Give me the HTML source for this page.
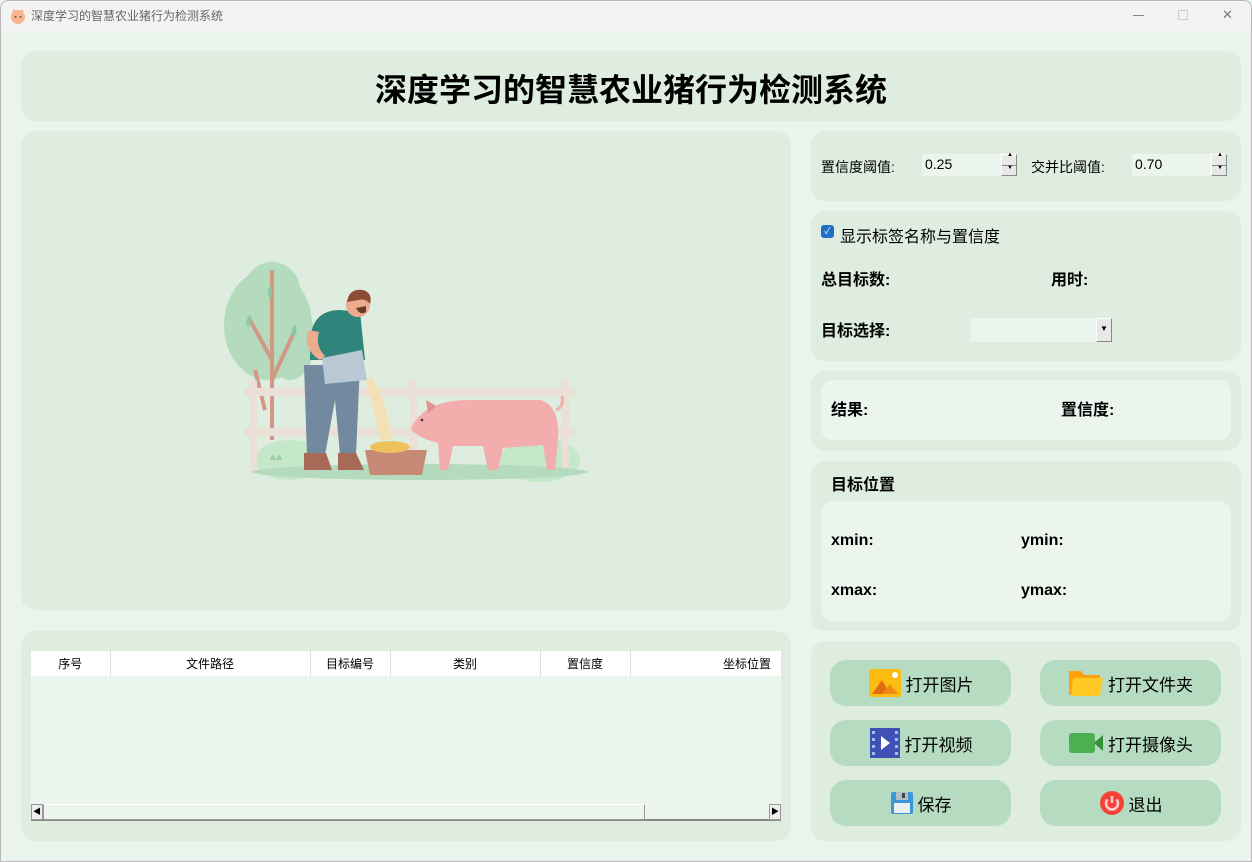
<!DOCTYPE html>
<html><head><meta charset="utf-8"><style>
*{margin:0;padding:0;box-sizing:border-box}
body{width:1252px;height:862px;overflow:hidden;background:#ebf4ec;font-family:"Liberation Sans","Noto Sans CJK SC",sans-serif;position:relative;color:#000}
.win{position:absolute;left:0;top:0;width:1252px;height:862px;border:1px solid #b8b8b8;border-radius:8px 8px 0 0}
.tb{position:absolute;left:1px;top:1px;width:1250px;height:30px;background:#f3f3f3;border-radius:8px 8px 0 0}
.tb .t{position:absolute;left:30px;top:6px;font-size:12px;color:#666}
.p{position:absolute;background:#dfede0;border-radius:14px}
.in{position:absolute;background:#ebf5ed;border-radius:12px}
.b{font-weight:bold;font-size:16px;position:absolute}
.btn{position:absolute;width:181px;height:46px;background:#b5dbc1;border-radius:16px;font-size:17px;display:flex;align-items:center;justify-content:center;gap:4px}
.spin{position:absolute;height:22px;background:#ebf5ed;font-size:14px;padding:2px 3px}
.arr{position:absolute;right:0;top:0;width:16px;height:22px;background:#e8e8e8;border:1px solid #888;border-left-color:#fff;border-top-color:#fff}
th{font-weight:normal;font-size:12px;background:#fff;height:25px;border-right:1px solid #ddd}
</style></head><body>
<div class="win"></div>
<div class="tb"><svg style="position:absolute;left:8px;top:6px" width="18" height="18"><circle cx="9" cy="10" r="7" fill="#f7b48d"/><path d="M3 5l2 -3 2 3zM11 5l2-3 2 3z" fill="#f7b48d"/><circle cx="6.5" cy="10" r="1" fill="#555"/><circle cx="11.5" cy="10" r="1" fill="#555"/></svg><span class="t">深度学习的智慧农业猪行为检测系统</span>
<span style="position:absolute;left:1132px;top:14px;width:11px;height:1px;background:#888"></span>
<span style="position:absolute;left:1177px;top:9px;width:10px;height:10px;border:1px solid #ccc"></span>
<span style="position:absolute;left:1221px;top:6px;font-size:13px;color:#777">✕</span></div>

<div class="p" style="left:21px;top:51px;width:1220px;height:70px"><div style="text-align:center;font-size:32px;font-weight:bold;line-height:78px">深度学习的智慧农业猪行为检测系统</div></div>

<div class="p" style="left:21px;top:131px;width:770px;height:479px">
<svg style="position:absolute;left:189px;top:119px" width="390" height="240" viewBox="0 0 390 240">
<ellipse cx="58" cy="75" rx="44" ry="55" fill="#b4dbbd"/><ellipse cx="62" cy="40" rx="28" ry="28" fill="#b4dbbd"/><ellipse cx="80" cy="90" rx="25" ry="40" fill="#b4dbbd"/>
<path d="M62 20 L62 190 M62 110 L40 70 M62 130 L85 80 M55 160 L45 120" stroke="#d29883" stroke-width="4" fill="none"/>
<path d="M60 35 q-4 8 0 14 q4 -6 0 -14z M40 65 q-6 6 -2 12 q6 -4 2 -12z M85 75 q-6 6 -2 12 q6 -4 2 -12z" fill="#8fc79e"/>
<ellipse cx="80" cy="210" rx="35" ry="20" fill="#c5e8c9"/><ellipse cx="330" cy="210" rx="40" ry="22" fill="#c5e8c9"/>
<g fill="#ebe0d6"><rect x="33" y="138" width="335" height="8"/><rect x="33" y="178" width="335" height="8"/><rect x="40" y="130" width="7" height="92"/><rect x="200" y="130" width="7" height="92"/><rect x="352" y="130" width="7" height="92"/></g>
<ellipse cx="210" cy="222" rx="168" ry="8" fill="#b4dbbd"/>
<path d="M100 95 Q100 60 130 60 L150 62 L155 110 L100 110Z" fill="#2f847c"/>
<path d="M98 80 q-5 20 12 30 l5 -4 q-10 -10 -6 -24z" fill="#eeab8d"/>
<path d="M94 115 L150 115 L146 205 L130 205 L125 150 L115 205 L97 205Z" fill="#7289a0"/>
<path d="M94 203 h22 l6 17 h-28z M128 203 h18 l8 17 h-26z" fill="#a66a56"/>
<path d="M112 108 l40 -8 l5 30 l-42 4z" fill="#b9c8d3"/>
<path d="M155 130 q10 30 15 60 l12 0 q-5 -40 -20 -62z" fill="#f3e0b6"/>
<circle cx="148" cy="55" r="12" fill="#eeab8d"/><path d="M137 52 q2 -14 16 -12 q10 3 7 14 q-4 -6 -12 -4z" fill="#8b4c33"/>
<path d="M146 58 q4 8 10 4 l0 -6z" fill="#6b3a28"/>
<path d="M155 200 h62 l-5 25 h-52z" fill="#c58976"/><ellipse cx="180" cy="197" rx="20" ry="6" fill="#edc25d"/>
<path d="M200 182 q10 -32 60 -32 l70 0 q20 5 18 40 l-3 30 h-8 l-4 -25 l-40 3 l-5 22 h-10 l-5 -24 l-30 0 l-5 24 h-8 l-2 -27 q-20 -5 -27 -14z" fill="#f3adad"/>
<path d="M346 160 q8 -3 6 -14" stroke="#f3adad" stroke-width="3" fill="none"/>
<path d="M216 150 l10 6 l-8 8z" fill="#e29090"/><circle cx="212" cy="170" r="1.3" fill="#333"/>
<path d="M60 210 q3 -10 6 0 q3 -10 6 0z" fill="#9fd1a8"/>
</svg></div>

<div class="p" style="left:21px;top:631px;width:770px;height:210px">
<div style="position:absolute;left:10px;top:20px;width:750px;height:170px;background:#ebf5ed">
<table style="border-collapse:collapse;width:750px"><tr><th style="width:79px">序号</th><th style="width:200px">文件路径</th><th style="width:80px">目标编号</th><th style="width:150px">类别</th><th style="width:90px">置信度</th><th style="text-align:right;padding-right:10px;border:none">坐标位置</th></tr></table>
<div style="position:absolute;left:0;top:153px;width:750px;height:17px;border-bottom:2px solid #888">
<div style="position:absolute;left:0;top:0;width:12px;height:16px;background:#eee;border:1px solid #999;font-size:8px;text-align:center;line-height:14px">◀</div>
<div style="position:absolute;left:12px;top:0;width:602px;height:16px;border:1px solid #999;border-top-color:#fff;background:#ebf5ed"></div>
<div style="position:absolute;right:0;top:0;width:12px;height:16px;background:#eee;border:1px solid #999;font-size:8px;text-align:center;line-height:14px">▶</div></div>
</div></div>

<div class="p" style="left:811px;top:131px;width:430px;height:70px">
<span style="position:absolute;left:10px;top:26px;font-size:14px">置信度阈值:</span>
<div class="spin" style="left:111px;top:23px;width:95px">0.25<div class="arr"><div style="position:absolute;left:0;top:10px;width:14px;height:1px;background:#888"></div><span style="position:absolute;left:5px;top:-3px;font-size:6px">▲</span><span style="position:absolute;left:5px;top:10px;font-size:6px">▼</span></div></div>
<span style="position:absolute;left:220px;top:26px;font-size:14px">交并比阈值:</span>
<div class="spin" style="left:321px;top:23px;width:95px">0.70<div class="arr"><div style="position:absolute;left:0;top:10px;width:14px;height:1px;background:#888"></div><span style="position:absolute;left:5px;top:-3px;font-size:6px">▲</span><span style="position:absolute;left:5px;top:10px;font-size:6px">▼</span></div></div>
</div>

<div class="p" style="left:811px;top:211px;width:430px;height:150px">
<span style="position:absolute;left:10px;top:14px;width:13px;height:13px;background:#1f6fc8;border-radius:3px;color:#fff;font-size:9px;text-align:center;line-height:13px">✓</span>
<span style="position:absolute;left:29px;top:12px;font-size:16px">显示标签名称与置信度</span>
<span class="b" style="left:10px;top:55px">总目标数:</span><span class="b" style="left:240px;top:55px">用时:</span>
<span class="b" style="left:10px;top:106px">目标选择:</span>
<div style="position:absolute;left:159px;top:107px;width:142px;height:24px;background:#ebf5ed"><div class="arr" style="height:24px;font-size:8px;text-align:center;line-height:20px">▼</div></div>
</div>

<div class="p" style="left:811px;top:371px;width:430px;height:80px"><div class="in" style="left:10px;top:9px;width:410px;height:60px"><span class="b" style="left:10px;top:16px">结果:</span><span class="b" style="left:240px;top:16px">置信度:</span></div></div>

<div class="p" style="left:811px;top:461px;width:430px;height:170px"><span class="b" style="left:20px;top:10px">目标位置</span>
<div class="in" style="left:10px;top:40px;width:410px;height:120px"><span class="b" style="left:10px;top:31px">xmin:</span><span class="b" style="left:200px;top:31px">ymin:</span><span class="b" style="left:10px;top:81px">xmax:</span><span class="b" style="left:200px;top:81px">ymax:</span></div></div>

<div class="p" style="left:811px;top:641px;width:430px;height:200px"></div>
<div class="btn" style="left:830px;top:660px"><svg width="34" height="30"><rect x="1" y="1" width="32" height="28" rx="2" fill="#fcbc11"/><path d="M4 26 L14 12 L22 26z" fill="#e06c0e"/><path d="M14 26 L22 16 L30 26z" fill="#ef8a14"/><circle cx="27" cy="7" r="3" fill="#fff"/></svg>打开图片</div>
<div class="btn" style="left:1040px;top:660px"><svg width="36" height="30"><path d="M1 3 h12 l3 4 h16 v20 h-31z" fill="#fea10a"/><path d="M5 10 h30 l-3 18 h-29z" fill="#ffc926"/></svg>打开文件夹</div>
<div class="btn" style="left:830px;top:720px"><svg width="32" height="32"><rect x="1" y="1" width="30" height="30" fill="#3f51b5"/><g fill="#9fc3e6"><rect x="3" y="4" width="3" height="3"/><rect x="3" y="11" width="3" height="3"/><rect x="3" y="18" width="3" height="3"/><rect x="3" y="25" width="3" height="3"/><rect x="26" y="4" width="3" height="3"/><rect x="26" y="11" width="3" height="3"/><rect x="26" y="18" width="3" height="3"/><rect x="26" y="25" width="3" height="3"/></g><path d="M12 9 L21 16 L12 23z" fill="#fff"/></svg>打开视频</div>
<div class="btn" style="left:1040px;top:720px"><svg width="36" height="22"><rect x="1" y="1" width="26" height="20" rx="3" fill="#4caf50"/><path d="M26 11 L35 3 V19z" fill="#388e3c"/></svg>打开摄像头</div>
<div class="btn" style="left:830px;top:780px"><svg width="24" height="24"><rect x="1" y="1" width="22" height="22" rx="2" fill="#3d96d8"/><rect x="6" y="1" width="12" height="8" fill="#b0bec5"/><rect x="12" y="2" width="3" height="5" fill="#37474f"/><rect x="4" y="12" width="16" height="10" fill="#eceff1"/></svg>保存</div>
<div class="btn" style="left:1040px;top:780px"><svg width="26" height="26"><circle cx="13" cy="13" r="12" fill="#f44336"/><path d="M8.5 9.5 A6 6 0 1 0 17.5 9.5" stroke="#ffcdd2" stroke-width="2.5" fill="none"/><path d="M13 6 V13" stroke="#ffcdd2" stroke-width="2.5"/></svg>退出</div>
</body></html>
